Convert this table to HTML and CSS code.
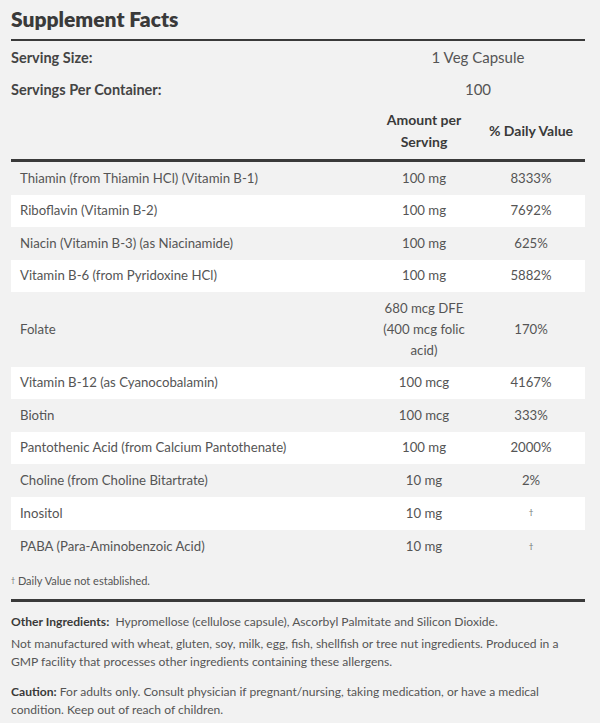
FILE: index.html
```html
<!DOCTYPE html>
<html>
<head>
<meta charset="utf-8">
<link rel="stylesheet" href="styles.css">
</head>
<body>
<div class="facts">
  <h1 class="title">Supplement Facts</h1>
  <table class="tbl">
    <colgroup><col class="c-name"><col class="c-amt"><col class="c-dv"></colgroup>
    <tbody class="serving">
      <tr><th class="lbl">Serving Size:</th><td colspan="2" class="val">1 Veg Capsule</td></tr>
      <tr><th class="lbl">Servings Per Container:</th><td colspan="2" class="val">100</td></tr>
      <tr class="head"><th></th><th class="hd">Amount per Serving</th><th class="hd">% Daily Value</th></tr>
    </tbody>
    <tbody class="rows">
      <tr><td>Thiamin (from Thiamin HCl) (Vitamin B-1)</td><td class="c">100 mg</td><td class="c">8333%</td></tr>
      <tr><td>Riboflavin (Vitamin B-2)</td><td class="c">100 mg</td><td class="c">7692%</td></tr>
      <tr><td>Niacin (Vitamin B-3) (as Niacinamide)</td><td class="c">100 mg</td><td class="c">625%</td></tr>
      <tr><td>Vitamin B-6 (from Pyridoxine HCl)</td><td class="c">100 mg</td><td class="c">5882%</td></tr>
      <tr><td>Folate</td><td class="c">680 mcg DFE (400 mcg folic acid)</td><td class="c">170%</td></tr>
      <tr><td>Vitamin B-12 (as Cyanocobalamin)</td><td class="c">100 mcg</td><td class="c">4167%</td></tr>
      <tr><td>Biotin</td><td class="c">100 mcg</td><td class="c">333%</td></tr>
      <tr><td>Pantothenic Acid (from Calcium Pantothenate)</td><td class="c">100 mg</td><td class="c">2000%</td></tr>
      <tr><td>Choline (from Choline Bitartrate)</td><td class="c">10 mg</td><td class="c">2%</td></tr>
      <tr><td>Inositol</td><td class="c">10 mg</td><td class="c"><span class="dag">†</span></td></tr>
      <tr><td>PABA (Para-Aminobenzoic Acid)</td><td class="c">10 mg</td><td class="c"><span class="dag">†</span></td></tr>
    </tbody>
  </table>
  <p class="foot"><span class="fdag">†</span> Daily Value not established.</p>
  <div class="other">
    <p><b>Other Ingredients:</b>&nbsp; Hypromellose (cellulose capsule), Ascorbyl Palmitate and Silicon Dioxide.</p>
    <p>Not manufactured with wheat, gluten, soy, milk, egg, fish, shellfish or tree nut ingredients. Produced in a GMP facility that processes other ingredients containing these allergens.</p>
    <p class="caution"><b>Caution:</b> For adults only. Consult physician if pregnant/nursing, taking medication, or have a medical condition. Keep out of reach of children.</p>
  </div>
</div>
</body>
</html>
```

FILE: styles.css
```css
html, body {
  margin: 0;
  padding: 0;
  background: #f2f2f2;
}
body {
  font-family: Lato, "Open Sans", sans-serif;
  color: #555;
}
.facts {
  width: 574px;
  margin-left: 11px;
  padding-top: 6px;
}
.title {
  margin: 0;
  font-size: 21px;
  font-weight: 800;
  color: #3a3a3a;
  line-height: 26px;
  padding-bottom: 7px;
  border-bottom: 2px solid #3a3a3a;
}
.tbl {
  width: 100%;
  border-collapse: collapse;
  table-layout: fixed;
}
.c-name { width: 360px; }
.c-amt { width: 106px; }
.c-dv { width: 108px; }
.serving th, .serving td {
  padding: 0;
  height: 32px;
  vertical-align: middle;
}
.lbl {
  text-align: left;
  font-weight: 700;
  font-size: 14.5px;
  color: #444;
}
.val {
  text-align: center;
  font-size: 15px;
  color: #555;
}
.head th {
  height: auto;
  padding: 4px 0 6px;
  line-height: 22px;
}
.hd {
  font-weight: 700;
  font-size: 14px;
  color: #3a3a3a;
  text-align: center;
}
.rows {
  border-top: 3px solid #3a3a3a;
}
.rows td {
  font-size: 13.2px;
  line-height: 21px;
  padding: 5.75px 9px;
  vertical-align: middle;
}
.rows td.c {
  text-align: center;
  padding: 5.75px 12px;
}
.rows tr:nth-child(even) td {
  background: #fff;
}
.dag {
  font-size: 8px;
  vertical-align: 3px;
  color: #666;
}
.foot {
  margin: 0;
  padding: 10px 0 12px;
  font-size: 11px;
  color: #555;
  border-bottom: 3px solid #3a3a3a;
}
.fdag {
  font-size: 7px;
  vertical-align: 2px;
  color: #666;
}
.other {
  padding-top: 11px;
}
.other p {
  margin: 0 0 4px;
  font-size: 12.1px;
  line-height: 18px;
  color: #555;
}
.other b {
  color: #3a3a3a;
  font-weight: 700;
}
.other .caution {
  margin-top: 12px;
}
```
